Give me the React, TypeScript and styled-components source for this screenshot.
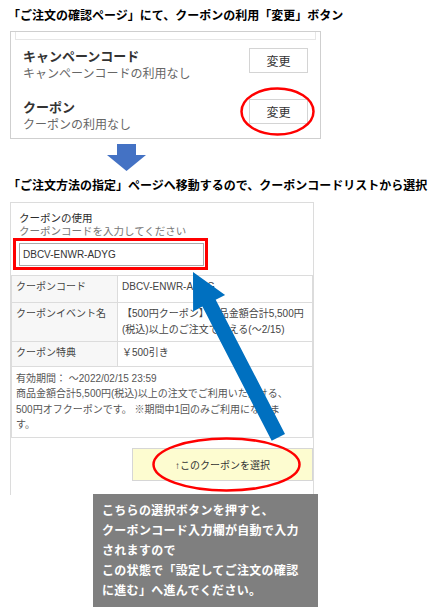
import styled, { createGlobalStyle } from "styled-components";

const GlobalStyle = createGlobalStyle`
  body {
    margin: 0;
    background: #fff;
    font-family: "Noto Sans CJK JP", sans-serif;
  }
`;

const Page = styled.div`
  position: relative;
  width: 433px;
  height: 611px;
  box-sizing: border-box;
  padding: 6px 0 0 8px;
  overflow: hidden;
`;

const Caption = styled.div<{ $top: number }>`
  margin-top: ${(p) => p.$top}px;
  font-size: 12px;
  font-weight: bold;
  line-height: 18px;
  color: #000;
  white-space: nowrap;
`;

/* --- panel 1: ご注文の確認ページ --- */
const ConfirmPanel = styled.div`
  margin: 7px 0 0 2px;
  width: 311px;
  box-sizing: border-box;
  border: 1px solid #cfcfcf;
  padding: 0 4px;
`;

const PrevStrip = styled.div`
  height: 7px;
  border: 1px solid #e6e6e6;
  border-top: none;
`;

const OptionList = styled.div`
  display: flex;
  flex-direction: column;
  gap: 17px;
  padding: 7px 8px 6px;
`;

const OptionRow = styled.div`
  display: flex;
  justify-content: space-between;
  align-items: flex-start;
`;

const OptionTitle = styled.div`
  font-size: 13px;
  font-weight: bold;
  line-height: 18px;
  color: #333;
`;

const OptionSub = styled.div`
  font-size: 12px;
  line-height: 16px;
  color: #666;
`;

const ChangeButton = styled.button`
  margin-top: 1px;
  width: 59px;
  height: 25px;
  padding: 0;
  border: 1px solid #d4d4d4;
  background: #fff;
  font-family: "Noto Sans CJK JP", sans-serif;
  font-size: 12px;
  color: #333;
`;

const DownArrow = styled.svg`
  display: block;
  margin: 5px 0 0 99px;
`;

/* --- panel 2: ご注文方法の指定 --- */
const MethodPanel = styled.div`
  margin: 8px 0 0 2px;
  width: 304px;
  box-sizing: border-box;
  border: 1px solid #dcdcdc;
  border-bottom: none;
  padding-bottom: 14px;
  font-family: "Liberation Sans", "Noto Sans CJK JP", sans-serif;
`;

const CouponHead = styled.div`
  padding: 9px 0 0 8px;
  font-size: 10.5px;
  line-height: 13px;
`;

const HeadTitle = styled.div`
  color: #2b2b2b;
`;

const HeadHint = styled.div`
  color: #777;
`;

const InputFrame = styled.div`
  margin-left: 2px;
  width: 195px;
  box-sizing: border-box;
  border: 3px solid #f00;
  padding: 2px 0 1px 3px;
`;

const CodeInput = styled.input`
  display: block;
  width: 185px;
  height: 23px;
  box-sizing: border-box;
  margin: 0;
  padding: 0 3px;
  border: 1px solid #a9a9a9;
  font-family: "Liberation Sans", sans-serif;
  font-size: 10px;
  color: #333;
  outline: none;
`;

const InfoTable = styled.table`
  margin-top: 5px;
  width: 100%;
  table-layout: fixed;
  border-collapse: collapse;
  font-size: 10px;
  line-height: 16px;
  color: #444;
`;

const Cell = styled.td<{ $h: number; $label?: boolean }>`
  height: ${(p) => p.$h}px;
  box-sizing: border-box;
  border: 1px solid #dcdcdc;
  padding: 3px 4px;
  vertical-align: top;
  background: ${(p) => (p.$label ? "#f7f7f7" : "#fff")};
`;

const NoteCell = styled.td`
  height: 71px;
  box-sizing: border-box;
  border: 1px solid #dcdcdc;
  padding: 4px 4px;
  vertical-align: top;
  line-height: 15.3px;
  color: #555;
  white-space: nowrap;
`;

const SelectRow = styled.div`
  display: flex;
  justify-content: flex-end;
  margin-top: 10px;
`;

const SelectButton = styled.button`
  width: 181px;
  height: 33px;
  padding: 0;
  border: 1px solid #d6d6d6;
  background: #fdfcd0;
  font-family: "Liberation Sans", "Noto Sans CJK JP", sans-serif;
  font-size: 10px;
  color: #333;
`;

const Callout = styled.div`
  margin: -1px 0 0 85px;
  width: 225px;
  box-sizing: border-box;
  padding: 6px 9px 7px;
  background: #7f7f7f;
  color: #fff;
  font-size: 12px;
  font-weight: bold;
  line-height: 20px;
  letter-spacing: 0.3px;
  white-space: nowrap;
`;

const Annotations = styled.svg`
  position: absolute;
  top: 0;
  left: 0;
  pointer-events: none;
`;

// big blue pointer from the select button up to the input
const tip = [193, 272];
const u = [0.459, 0.889];
const pr = [0.889, -0.459];
const at = (d: number, w: number) =>
  `${(tip[0] + u[0] * d + pr[0] * w).toFixed(1)},${(tip[1] + u[1] * d + pr[1] * w).toFixed(1)}`;
const pointer = [
  at(0, 0),
  at(35, 18),
  at(35, 7.5),
  at(186, 7.5),
  at(186, -7.5),
  at(35, -7.5),
  at(35, -18),
].join(" ");

export default function App() {
  return (
    <Page>
      <GlobalStyle />
      <Caption $top={0}>「ご注文の確認ページ」にて、クーポンの利用「変更」ボタン</Caption>
      <ConfirmPanel>
        <PrevStrip />
        <OptionList>
          <OptionRow>
            <div>
              <OptionTitle>キャンペーンコード</OptionTitle>
              <OptionSub>キャンペーンコードの利用なし</OptionSub>
            </div>
            <ChangeButton>変更</ChangeButton>
          </OptionRow>
          <OptionRow>
            <div>
              <OptionTitle>クーポン</OptionTitle>
              <OptionSub>クーポンの利用なし</OptionSub>
            </div>
            <ChangeButton>変更</ChangeButton>
          </OptionRow>
        </OptionList>
      </ConfirmPanel>

      <DownArrow width="40" height="28" viewBox="0 0 40 28">
        <polygon points="10,0 29,0 29,11 39,11 19.5,27 0,11 10,11" fill="#4472c4" />
      </DownArrow>

      <Caption $top={4}>
        「ご注文方法の指定」ページへ移動するので、クーポンコードリストから選択
      </Caption>
      <MethodPanel>
        <CouponHead>
          <HeadTitle>クーポンの使用</HeadTitle>
          <HeadHint>クーポンコードを入力してください</HeadHint>
        </CouponHead>
        <InputFrame>
          <CodeInput readOnly value="DBCV-ENWR-ADYG" />
        </InputFrame>
        <InfoTable>
          <colgroup>
            <col style={{ width: 106 }} />
            <col />
          </colgroup>
          <tbody>
            <tr>
              <Cell $h={27} $label>クーポンコード</Cell>
              <Cell $h={27}>DBCV-ENWR-ADYG</Cell>
            </tr>
            <tr>
              <Cell $h={39} $label>クーポンイベント名</Cell>
              <Cell $h={39}>
                【500円クーポン】商品金額合計5,500円(税込)以上のご注文で使える(〜2/15)
              </Cell>
            </tr>
            <tr>
              <Cell $h={25} $label>クーポン特典</Cell>
              <Cell $h={25}>￥500引き</Cell>
            </tr>
            <tr>
              <NoteCell colSpan={2}>
                有効期間： 〜2022/02/15 23:59
                <br />
                商品金額合計5,500円(税込)以上の注文でご利用いただける、
                <br />
                500円オフクーポンです。 ※期間中1回のみご利用になれま
                <br />
                す。
              </NoteCell>
            </tr>
          </tbody>
        </InfoTable>
        <SelectRow>
          <SelectButton>↑このクーポンを選択</SelectButton>
        </SelectRow>
      </MethodPanel>

      <Callout>
        こちらの選択ボタンを押すと、
        <br />
        クーポンコード入力欄が自動で入力
        <br />
        されますので
        <br />
        この状態で「設定してご注文の確認
        <br />
        に進む」へ進んでください。
      </Callout>

      <Annotations width="433" height="611" viewBox="0 0 433 611">
        <ellipse cx="277.5" cy="111.5" rx="36" ry="23" fill="none" stroke="#f00" strokeWidth="2.5" />
        <polygon points={pointer} fill="#0070c0" />
        <ellipse cx="226.5" cy="464.5" rx="73" ry="26" fill="none" stroke="#f00" strokeWidth="2.5" />
      </Annotations>
    </Page>
  );
}
